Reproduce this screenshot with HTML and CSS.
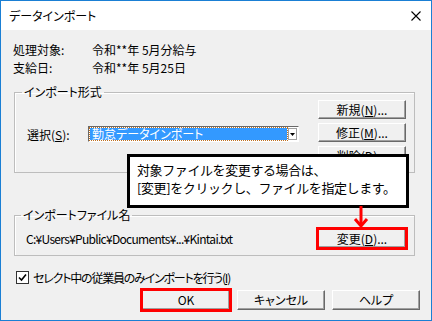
FILE: index.html
```html
<!DOCTYPE html>
<html lang="ja">

<head>
    <meta charset="UTF-8">
    <meta name="viewport" content="width=device-width, initial-scale=1.0">
    <title>データインポート</title>
    <link rel="stylesheet" href="styles.css">
</head>

<body>

    <div class="window">
        <div class="titlebar">
            <span class="title">データインポート</span>
            <svg class="close" width="10" height="10" viewBox="0 0 10 10">
                <path d="M0.5 0.5 L9.5 9.5 M9.5 0.5 L0.5 9.5" stroke="#000" stroke-width="1.1" fill="none"/>
            </svg>
        </div>

        <div class="content">
            <div class="info">
                <span>処理対象:</span><span>令和**年 5月分給与</span>
                <span>支給日:</span><span>令和**年 5月25日</span>
            </div>

            <fieldset class="group">
                <legend>インポート形式</legend>
                <div class="group-body">
                    <div class="select-row">
                        <span class="select-label">選択(<u>S</u>):</span>
                        <div class="combo">
                            <span class="combo-value">勤怠データインポート</span>
                            <span class="combo-drop">
                                <svg width="5" height="3" viewBox="0 0 5 3"><path d="M0 0 H5 L2.5 3 Z" fill="#000"/></svg>
                            </span>
                        </div>
                    </div>
                    <div class="side-buttons">
                        <button class="btn">新規(<u>N</u>)...</button>
                        <button class="btn">修正(<u>M</u>)...</button>
                        <button class="btn">削除(<u>D</u>)...</button>
                    </div>
                </div>
            </fieldset>

            <fieldset class="group group-file">
                <legend>インポートファイル名</legend>
                <div class="group-body file-row">
                    <span class="path">C:¥Users¥Public¥Documents¥...¥Kintai.txt</span>
                    <button class="btn marked">変更(<u>D</u>)...</button>
                </div>
            </fieldset>

            <label class="check-row">
                <span class="checkbox">
                    <svg width="9" height="9" viewBox="0 0 9 9"><path d="M1 4.5 L3.5 7 L8 1.5" stroke="#000" stroke-width="1.6" fill="none"/></svg>
                </span>
                <span class="check-label">セレクト中の従業員のみインポートを行う(<u>I</u>)</span>
            </label>

            <div class="footer">
                <button class="btn btn-wide marked">OK</button>
                <button class="btn btn-wide">キャンセル</button>
                <button class="btn btn-wide">ヘルプ</button>
            </div>
        </div>

        <!-- annotation over the dialog -->
        <div class="callout">
            対象ファイルを変更する場合は、<br>
            [変更]をクリックし、ファイルを指定します。
        </div>
        <svg class="arrow" width="16" height="24" viewBox="0 0 16 24">
            <path d="M8 0 V20" stroke="#f00" stroke-width="3" fill="none"/>
            <path d="M2 13 L8 20 L14 13" stroke="#f00" stroke-width="3" fill="none"/>
        </svg>
    </div>

</body>

</html>
```

FILE: styles.css
```css
body {
    margin: 0;
    font-family: "Noto Sans CJK JP", "Noto Sans", sans-serif;
    font-size: 12px;
    font-feature-settings: "palt";
    color: #000;
}

.window {
    position: relative;
    width: 432px;
    height: 321px;
    box-sizing: border-box;
    border: 1px solid #1a7fd4;
    background-color: #f0f0f0;
}

.titlebar {
    display: flex;
    align-items: center;
    justify-content: space-between;
    height: 29px;
    padding: 0 10px 0 8px;
    background-color: #fff;
}

.title {
    font-size: 12px;
}

.content {
    display: flex;
    flex-direction: column;
    height: 290px;
}

.info {
    display: grid;
    grid-template-columns: 79px auto;
    line-height: 18px;
    margin: 11px 0 0 12px;
}

.group {
    margin: 7px 16px 0 13px;
    padding: 0 8px 7px 12px;
    border: 1px solid #bdbdbd;
    box-shadow: inset 1px 1px 0 #fff;
    min-width: 0;
}

.group legend {
    padding: 0 2px;
    margin-left: -5px;
    line-height: 16px;
}

.group-body {
    display: flex;
    align-items: center;
    justify-content: space-between;
}

.select-row {
    display: flex;
    align-items: center;
    margin-top: 3px;
}

.select-label {
    width: 61px;
}

.combo {
    display: flex;
    align-items: center;
    width: 211px;
    height: 16px;
    box-sizing: border-box;
    border-top: 1px solid #696969;
    border-left: 1px solid #696969;
    border-bottom: 1px solid #fff;
    border-right: 1px solid #fff;
    background-color: #fff;
}

.combo-value {
    flex: 1;
    height: 12px;
    margin: 0 1px;
    padding-left: 2px;
    line-height: 12px;
    color: #fff;
    background-color: #3399ff;
    outline: 1px dotted #c07020;
}

.combo-drop {
    display: flex;
    align-items: center;
    justify-content: center;
    width: 9px;
    height: 12px;
    margin-right: 1px;
    border: 1px solid #a0a0a0;
    box-sizing: border-box;
    background-color: #fff;
}

.side-buttons {
    display: flex;
    flex-direction: column;
    gap: 4px;
}

.btn {
    width: 88px;
    height: 19px;
    padding: 0;
    font-family: inherit;
    font-size: 12px;
    font-feature-settings: "palt";
    line-height: 16px;
    color: #000;
    background-color: #f0f0f0;
    border: 1px solid;
    border-color: #fff #696969 #696969 #fff;
    box-shadow: inset -1px -1px 0 #a0a0a0;
}

.btn-wide {
    height: 20px;
}

.marked {
    outline: 3px solid #f00;
    outline-offset: -1px;
}

.group-file {
    margin-top: 34px;
    padding-left: 11px;
    padding-bottom: 7px;
}

.file-row {
    padding-top: 6px;
}

.path {
    letter-spacing: -0.7px;
}

.check-row {
    display: flex;
    align-items: center;
    gap: 4px;
    height: 18px;
    margin: 12px 0 0 15px;
}

.check-label {
    letter-spacing: -1.2px;
}

.checkbox {
    display: flex;
    align-items: center;
    justify-content: center;
    width: 13px;
    height: 13px;
    box-sizing: border-box;
    border: 1px solid #333;
    background-color: #fff;
}

.footer {
    display: flex;
    justify-content: flex-end;
    gap: 7px;
    margin-top: 4px;
    padding-right: 11px;
}

.callout {
    position: absolute;
    left: 126px;
    top: 153px;
    width: 282px;
    height: 54px;
    box-sizing: border-box;
    padding: 4px 0 0 7px;
    border: 3px solid #000;
    background-color: #fff;
    font-size: 13px;
    font-feature-settings: normal;
    letter-spacing: -0.4px;
    line-height: 18px;
}

.arrow {
    position: absolute;
    left: 352px;
    top: 205px;
}
```
